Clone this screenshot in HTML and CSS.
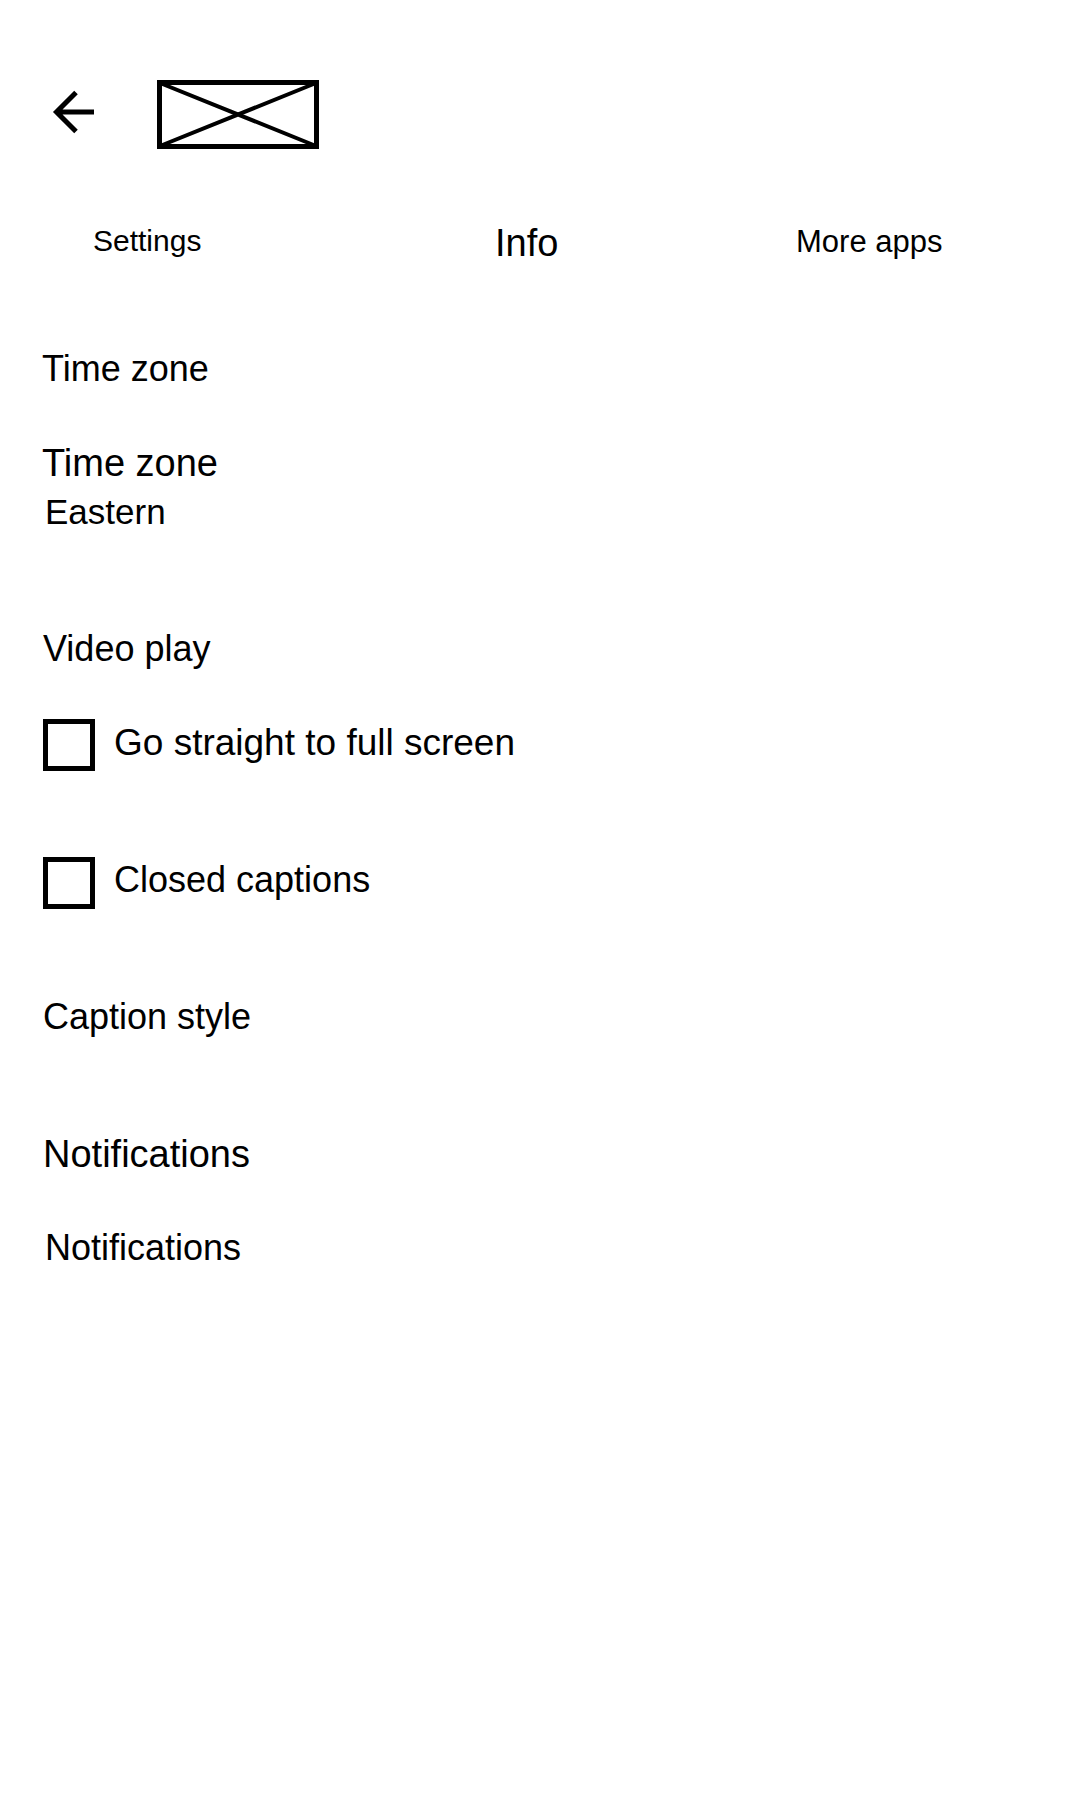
FILE: index.html
```html
<!DOCTYPE html>
<html lang="en">
<head>
<meta charset="utf-8">
<title>Settings</title>
<link rel="stylesheet" href="styles.css">
</head>
<body>
<header class="app-header">
  <svg class="back-icon" width="50" height="50" viewBox="0 0 50 50" aria-label="Back">
    <path d="M46 25 H10 M28 5.5 L8.5 25 L28 44.5" fill="none" stroke="#000" stroke-width="5" stroke-linejoin="miter"/>
  </svg>
  <svg class="logo" width="162" height="69" viewBox="0 0 162 69" aria-label="Logo">
    <rect x="2.5" y="2.5" width="157" height="64" fill="none" stroke="#000" stroke-width="5"/>
    <path d="M3 3 L159 66 M3 66 L159 3" fill="none" stroke="#000" stroke-width="4"/>
  </svg>
</header>

<nav class="tabs">
  <div class="tab tab-settings">Settings</div>
  <div class="tab tab-info">Info</div>
  <div class="tab tab-more">More apps</div>
</nav>

<main class="content">
  <h2 class="group-title group-time">Time zone</h2>
  <div class="setting setting-tz">
    <div class="setting-name">Time zone</div>
    <div class="setting-value">Eastern</div>
  </div>

  <h2 class="group-title group-video">Video play</h2>
  <label class="check-row check-first">
    <span class="checkbox"></span>
    <span class="check-label label-full">Go straight to full screen</span>
  </label>
  <label class="check-row check-second">
    <span class="checkbox"></span>
    <span class="check-label">Closed captions</span>
  </label>
  <div class="caption-style">Caption style</div>

  <h2 class="group-title group-notif">Notifications</h2>
  <div class="notif-item">Notifications</div>
</main>
</body>
</html>
```
FILE: styles.css
```css
html, body {
  margin: 0;
  padding: 0;
  background: #fff;
}

body {
  width: 1080px;
  min-height: 1800px;
  font-family: "Liberation Sans", Arial, sans-serif;
  color: #000;
}

.app-header {
  display: flex;
  align-items: flex-start;
  padding: 80px 0 0 48px;
}

.back-icon {
  display: block;
  margin-top: 7px;
}

.logo {
  display: block;
  margin-left: 59px;
}

.tabs {
  display: grid;
  grid-template-columns: 402px 301px auto;
  align-items: center;
  height: 50px;
  margin-top: 67px;
  padding-left: 93px;
}

.tab {
  line-height: 1;
  white-space: nowrap;
}

.tab-settings { font-size: 30px; }
.tab-info { font-size: 38px; margin-top: 3px; }
.tab-more { font-size: 31px; }

.content {
  padding-left: 42px;
}

.group-title {
  margin: 0;
  font-weight: normal;
  font-size: 36px;
  line-height: 1;
}

.group-time { margin-top: 85px; }
.group-video { margin-top: 102px; padding-left: 1px; }
.group-notif { margin-top: 100px; font-size: 38px; padding-left: 1px; }

.setting { margin-top: 57px; }

.setting-name {
  font-size: 38px;
  line-height: 1;
}

.setting-value {
  font-size: 35px;
  line-height: 1;
  margin-top: 12px;
  padding-left: 3px;
}

.check-row {
  display: flex;
  align-items: flex-start;
  padding-left: 1px;
}

.check-first { margin-top: 52px; }
.check-second { margin-top: 86px; }

.checkbox {
  box-sizing: border-box;
  width: 52px;
  height: 52px;
  border: 5px solid #000;
  flex: none;
}

.check-label {
  font-size: 36px;
  line-height: 1;
  margin-top: 5px;
  margin-left: 19px;
}

.label-full { font-size: 37px; }

.caption-style {
  font-size: 36px;
  line-height: 1;
  margin-top: 90px;
  padding-left: 1px;
}

.notif-item {
  font-size: 36px;
  line-height: 1;
  margin-top: 57px;
  padding-left: 3px;
}
```
